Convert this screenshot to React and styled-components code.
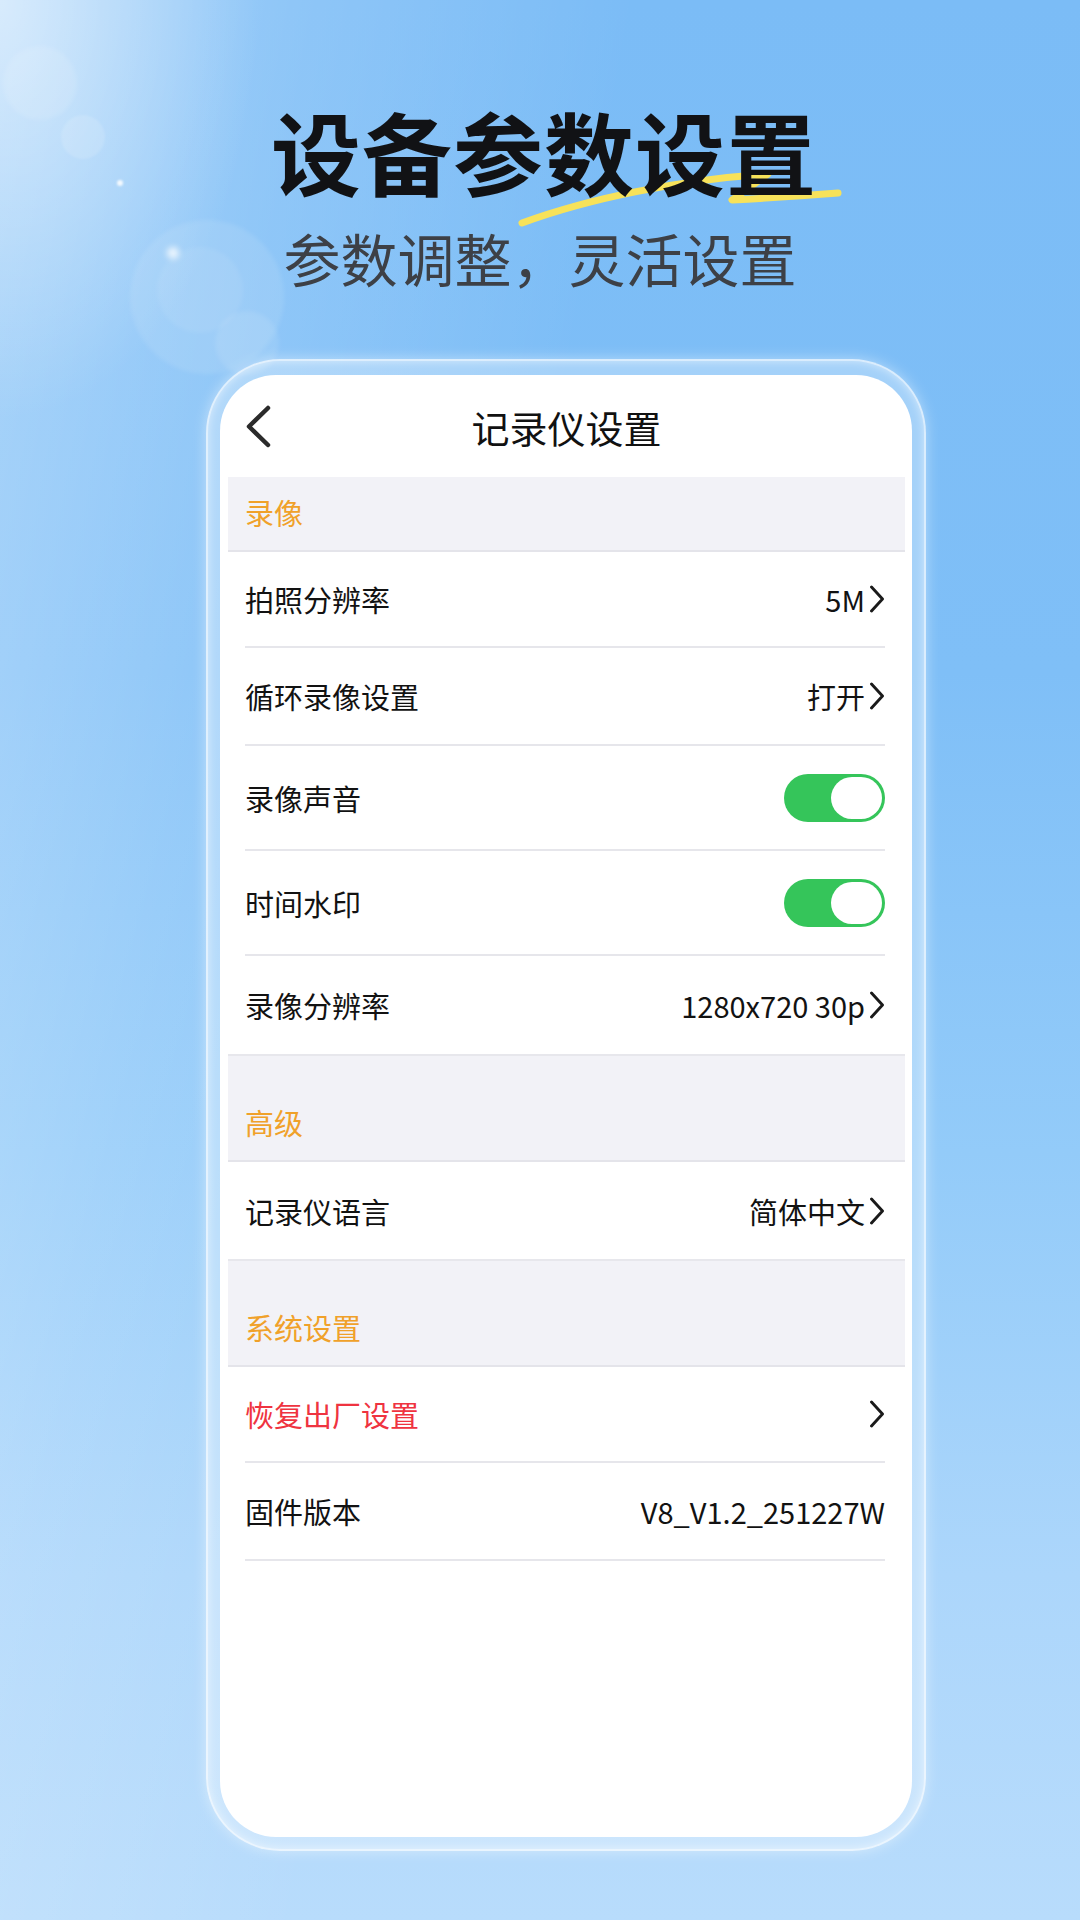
import React from "react";
import styled, { createGlobalStyle } from "styled-components";

const Global = createGlobalStyle`
  html, body { margin: 0; padding: 0; }
  body { font-family: "Noto Sans CJK SC", "Noto Sans", sans-serif; }
  * { box-sizing: border-box; }
`;

const Page = styled.div`
  position: relative;
  width: 1080px;
  height: 1920px;
  overflow: hidden;
  display: flex;
  flex-direction: column;
  align-items: center;
  background:
    radial-gradient(ellipse 260px 420px at 0px 0px, rgba(255,255,255,0.55) 0%, rgba(255,255,255,0) 100%),
    linear-gradient(100deg, rgba(255,255,255,0.34) 0%, rgba(255,255,255,0.14) 22%, rgba(255,255,255,0) 45%),
    linear-gradient(180deg, #7bbcf6 0%, #7fbff7 35%, #93cbf9 60%, #acd6fb 82%, #b8dcfc 100%);
`;

const Bokeh = styled.div`
  position: absolute;
  border-radius: 50%;
  pointer-events: none;
  background: rgba(255, 255, 255, ${(p) => p.$a});
  filter: blur(${(p) => p.$blur || 0}px);
`;

const Header = styled.header`
  position: relative;
  width: 100%;
  padding-top: 96px;
  text-align: center;
`;

const Title = styled.h1`
  position: relative;
  z-index: 1;
  margin: 0;
  padding-left: 8px;
  font-size: 90px;
  line-height: 1.2;
  font-weight: 700;
  letter-spacing: 1px;
  color: #111215;
`;

const Subtitle = styled.p`
  margin: 19px 0 0;
  font-size: 57px;
  line-height: 1.2;
  font-weight: 400;
  color: #3d4046;
`;

const Swoosh = styled.svg`
  position: absolute;
  left: 500px;
  top: 160px;
  width: 360px;
  height: 80px;
  z-index: 0;
  overflow: visible;
`;

const Frame = styled.div`
  align-self: flex-start;
  margin: 68px 0 0 206px;
  width: 720px;
  height: 1492px;
  padding: 14px 12px 12px 12px;
  border-radius: 74px;
  border: 2px solid rgba(255, 255, 255, 0.6);
  background: rgba(255, 255, 255, 0.3);
  box-shadow: 0 0 14px rgba(255, 255, 255, 0.45), inset 0 0 10px rgba(255, 255, 255, 0.55);
`;

const Card = styled.div`
  width: 100%;
  height: 100%;
  background: #ffffff;
  border-radius: 56px;
  overflow: hidden;
  padding: 0 7px 0 8px;
  display: flex;
  flex-direction: column;
`;

const Nav = styled.div`
  height: 102px;
  flex-shrink: 0;
  display: grid;
  grid-template-columns: 1fr auto 1fr;
  align-items: center;
`;

const Back = styled.div`
  padding-left: 17px;
  display: flex;
  align-items: center;
`;

const NavTitle = styled.div`
  font-size: 38px;
  color: #111;
  font-weight: 400;
  line-height: 1.2;
`;

const Section = styled.div`
  height: ${(p) => p.$h}px;
  flex-shrink: 0;
  background: #f2f2f7;
  border-top: ${(p) => (p.$first ? "none" : "2px solid #e7e7ec")};
  border-bottom: 2px solid #e4e4ea;
  display: flex;
  align-items: flex-end;
  padding: 0 17px 20px;
  font-size: 29px;
  line-height: 36px;
  color: #f0a12a;
`;

const Row = styled.div`
  height: ${(p) => p.$h}px;
  flex-shrink: 0;
  margin: 0 20px 0 17px;
  display: flex;
  align-items: center;
  justify-content: space-between;
  border-bottom: ${(p) => (p.$last ? "none" : "2px solid #e6e6eb")};
`;

const Label = styled.span`
  font-size: 29px;
  line-height: 36px;
  color: ${(p) => (p.$danger ? "#ef3340" : "#121212")};
`;

const Value = styled.span`
  display: flex;
  align-items: center;
  gap: 4px;
  font-size: 29px;
  line-height: 36px;
  color: #121212;
`;

const Toggle = styled.div`
  width: 101px;
  height: 48px;
  border-radius: 24px;
  background: #35c55a;
  padding: 3px;
  display: flex;
  justify-content: flex-end;
`;

const Knob = styled.div`
  width: 51px;
  height: 42px;
  border-radius: 21px;
  background: #ffffff;
`;

const Chevron = () => (
  <svg width="16" height="28" viewBox="0 0 16 28">
    <path d="M2.5 2 L13.5 14 L2.5 26" fill="none" stroke="#1a1a1a" strokeWidth="2.9" strokeLinecap="round" strokeLinejoin="round" />
  </svg>
);

const BackIcon = () => (
  <svg width="28" height="44" viewBox="0 0 28 44">
    <path d="M23 4 L4 22.5 L23 41" fill="none" stroke="#2b2b2b" strokeWidth="4.5" strokeLinecap="round" strokeLinejoin="round" />
  </svg>
);

const SettingRow = ({ label, value, chevron, toggle, danger, h = 97, last }) => (
  <Row $h={h} $last={last}>
    <Label $danger={danger}>{label}</Label>
    {toggle ? (
      <Toggle>
        <Knob />
      </Toggle>
    ) : (
      <Value>
        {value}
        {chevron && <Chevron />}
      </Value>
    )}
  </Row>
);

export default function App() {
  return (
    <>
      <Global />
      <Page>
        <Bokeh $a={0.12} $blur={2} style={{ left: 3, top: 46, width: 74, height: 74 }} />
        <Bokeh $a={0.14} $blur={1} style={{ left: 61, top: 115, width: 44, height: 44 }} />
        <Bokeh $a={0.85} $blur={1} style={{ left: 117, top: 180, width: 6, height: 6 }} />
        <Bokeh $a={0.1} $blur={2} style={{ left: 130, top: 220, width: 154, height: 154 }} />
        <Bokeh $a={0.08} $blur={2} style={{ left: 157, top: 247, width: 86, height: 86 }} />
        <Bokeh $a={0.1} $blur={2} style={{ left: 215, top: 311, width: 64, height: 64 }} />
        <Bokeh $a={0.8} $blur={3} style={{ left: 167, top: 247, width: 12, height: 12 }} />
        <Header>
          <Swoosh viewBox="0 0 360 80">
            <path
              d="M22 63 C 90 38, 180 20, 268 14 L 232 40 C 270 38, 300 36, 338 33"
              fill="none"
              stroke="#f7e25a"
              strokeWidth="7"
              strokeLinecap="round"
              strokeLinejoin="round"
            />
          </Swoosh>
          <Title>设备参数设置</Title>
          <Subtitle>参数调整，灵活设置</Subtitle>
        </Header>
        <Frame>
          <Card>
            <Nav>
              <Back>
                <BackIcon />
              </Back>
              <NavTitle>记录仪设置</NavTitle>
              <div />
            </Nav>
            <Section $h={75} $first>录像</Section>
            <SettingRow label="拍照分辨率" value="5M" chevron h={96} />
            <SettingRow label="循环录像设置" value="打开" chevron h={98} />
            <SettingRow label="录像声音" toggle h={105} />
            <SettingRow label="时间水印" toggle h={105} />
            <SettingRow label="录像分辨率" value="1280x720 30p" chevron h={98} last />
            <Section $h={108}>高级</Section>
            <SettingRow label="记录仪语言" value="简体中文" chevron h={97} last />
            <Section $h={108}>系统设置</Section>
            <SettingRow label="恢复出厂设置" chevron danger h={96} />
            <SettingRow label="固件版本" value="V8_V1.2_251227W" h={98} />
          </Card>
        </Frame>
      </Page>
    </>
  );
}
